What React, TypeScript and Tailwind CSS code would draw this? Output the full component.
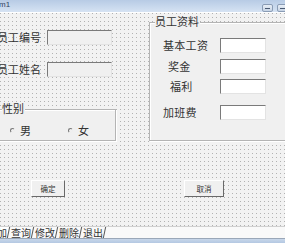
import React from 'react';

// VB6-style form designer: Form1 with employee fields

const TextBox = ({ className = '' }: { className?: string }) => (
  <div
    className={`h-[15px] shrink-0 border border-t-[#7a7a7a] border-l-[#7a7a7a] border-r-[#e3e3e3] border-b-[#e3e3e3] ${className}`}
  />
);

const Button = ({ label, className = '' }: { label: string; className?: string }) => (
  <div
    className={`h-[17px] flex items-center justify-center bg-[#f0f0f0] border border-t-white border-l-white border-r-[#696969] border-b-[#696969] text-[7.5px] leading-none text-[#333] ${className}`}
  >
    {label}
  </div>
);

const Radio = ({ label, className = '' }: { label: string; className?: string }) => (
  <div className={`flex items-center ${className}`}>
    <span className="w-[5px] h-[5px] rounded-full border border-t-[#777] border-l-[#777] border-r-[#eee] border-b-[#eee]" />
    <span className="ml-[5px] text-[11px] leading-none">{label}</span>
  </div>
);

const TitleButton = () => (
  <div className="w-[11px] h-[8px] rounded-[2px] border border-[#8a9cb5] bg-gradient-to-b from-[#e8eef6] to-[#c7d4e5] flex items-center justify-center">
    <span className="w-[5px] h-[1px] bg-[#4a5a72]" />
  </div>
);

const tabs = ['查询', '修改', '删除', '退出'];

export default function App() {
  return (
    <div className="w-[285px] h-[243px] overflow-hidden flex flex-col bg-[#f0f0f0] text-[#333] font-['Noto_Sans_CJK_SC',sans-serif]">
      {/* title bar */}
      <div className="h-[12px] flex items-start bg-gradient-to-b from-[#b7cbe5] to-[#d6e3f3]">
        <span className="ml-[-1px] text-[8px] leading-[10px] text-[#33445e] font-['Liberation_Sans',sans-serif]">
          m1
        </span>
        <div className="ml-auto mt-[4px] mr-[-3px] flex gap-[4px]">
          <TitleButton />
          <TitleButton />
        </div>
      </div>

      {/* form body with designer grid */}
      <div className="h-[214px] flex border-t border-white bg-[#f2f2f2] bg-[conic-gradient(at_1px_1px,transparent_75%,#b2b2b2_0)] bg-[length:4px_4px]">
        {/* left column */}
        <div className="ml-[-6px] w-[122px] shrink-0 flex flex-col">
          <div className="mt-[17px] flex items-center">
            <span className="ml-[3px] w-[50px] shrink-0 whitespace-nowrap text-[11px] leading-none">员工编号</span>
            <TextBox className="w-[65px] bg-[#f0f0f0]" />
          </div>
          <div className="mt-[17px] flex items-center">
            <span className="ml-[3px] w-[50px] shrink-0 whitespace-nowrap text-[11px] leading-none">员工姓名</span>
            <TextBox className="w-[65px] bg-[#f0f0f0]" />
          </div>
          <div className="relative mt-[32px] h-[32px] bg-[#f0f0f0] border border-[#b4b4b4] shadow-[inset_1px_1px_0_#fff,1px_1px_0_#fff]">
            <span className="absolute left-[7px] top-[-7px] bg-[#f0f0f0] text-[11px] leading-none pr-[1px]">性别</span>
            <div className="mt-[15px] flex items-center">
              <Radio label="男" className="ml-[15px]" />
              <Radio label="女" className="ml-[37px]" />
            </div>
          </div>
          <Button label="确定" className="mt-[39px] ml-[37px] w-[34px]" />
        </div>

        {/* right column */}
        <div className="ml-[33px] w-[141px] shrink-0 flex flex-col">
          <div className="relative mt-[9px] h-[119px] bg-[#f0f0f0] border border-[#b4b4b4] shadow-[inset_1px_1px_0_#fff,1px_1px_0_#fff]">
            <span className="absolute left-[5px] top-[-7px] bg-[#f0f0f0] text-[11px] leading-none pr-[1px]">员工资料</span>
            <div className="mt-[15px] flex items-center">
              <span className="ml-[13px] w-[57px] whitespace-nowrap text-[11px] leading-none tracking-[0.3px]">基本工资</span>
              <TextBox className="w-[46px] bg-white" />
            </div>
            <div className="mt-[6px] flex items-center">
              <span className="ml-[18px] w-[52px] whitespace-nowrap text-[11px] leading-none tracking-[0.3px]">奖金</span>
              <TextBox className="w-[46px] bg-white" />
            </div>
            <div className="mt-[5px] flex items-center">
              <span className="ml-[20px] w-[50px] whitespace-nowrap text-[11px] leading-none tracking-[0.3px]">福利</span>
              <TextBox className="w-[46px] bg-white" />
            </div>
            <div className="mt-[11px] flex items-center">
              <span className="ml-[13px] w-[57px] whitespace-nowrap text-[11px] leading-none tracking-[0.3px]">加班费</span>
              <TextBox className="w-[46px] bg-white" />
            </div>
          </div>
          <Button label="取消" className="mt-[39px] ml-[35px] w-[40px]" />
        </div>
      </div>

      {/* tab strip */}
      <div className="h-[12px] flex items-stretch bg-[#f9f9f9] border-t border-[#d0d0d0] text-[10px] leading-none">
        <div className="ml-[-4px] w-[13px] flex items-center justify-end pr-[1px] border-r border-[#555] skew-x-[-12deg] bg-white">
          <span className="skew-x-[12deg] whitespace-nowrap">加</span>
        </div>
        {tabs.map((t) => (
          <div
            key={t}
            className="w-[24px] flex items-center justify-center border-r border-[#555] skew-x-[-12deg]"
          >
            <span className="skew-x-[12deg] whitespace-nowrap">{t}</span>
          </div>
        ))}
      </div>
      <div className="h-[5px] border-t border-[#9aa7b8] bg-gradient-to-b from-[#c8d7ea] to-[#b4c8e2]" />
    </div>
  );
}
